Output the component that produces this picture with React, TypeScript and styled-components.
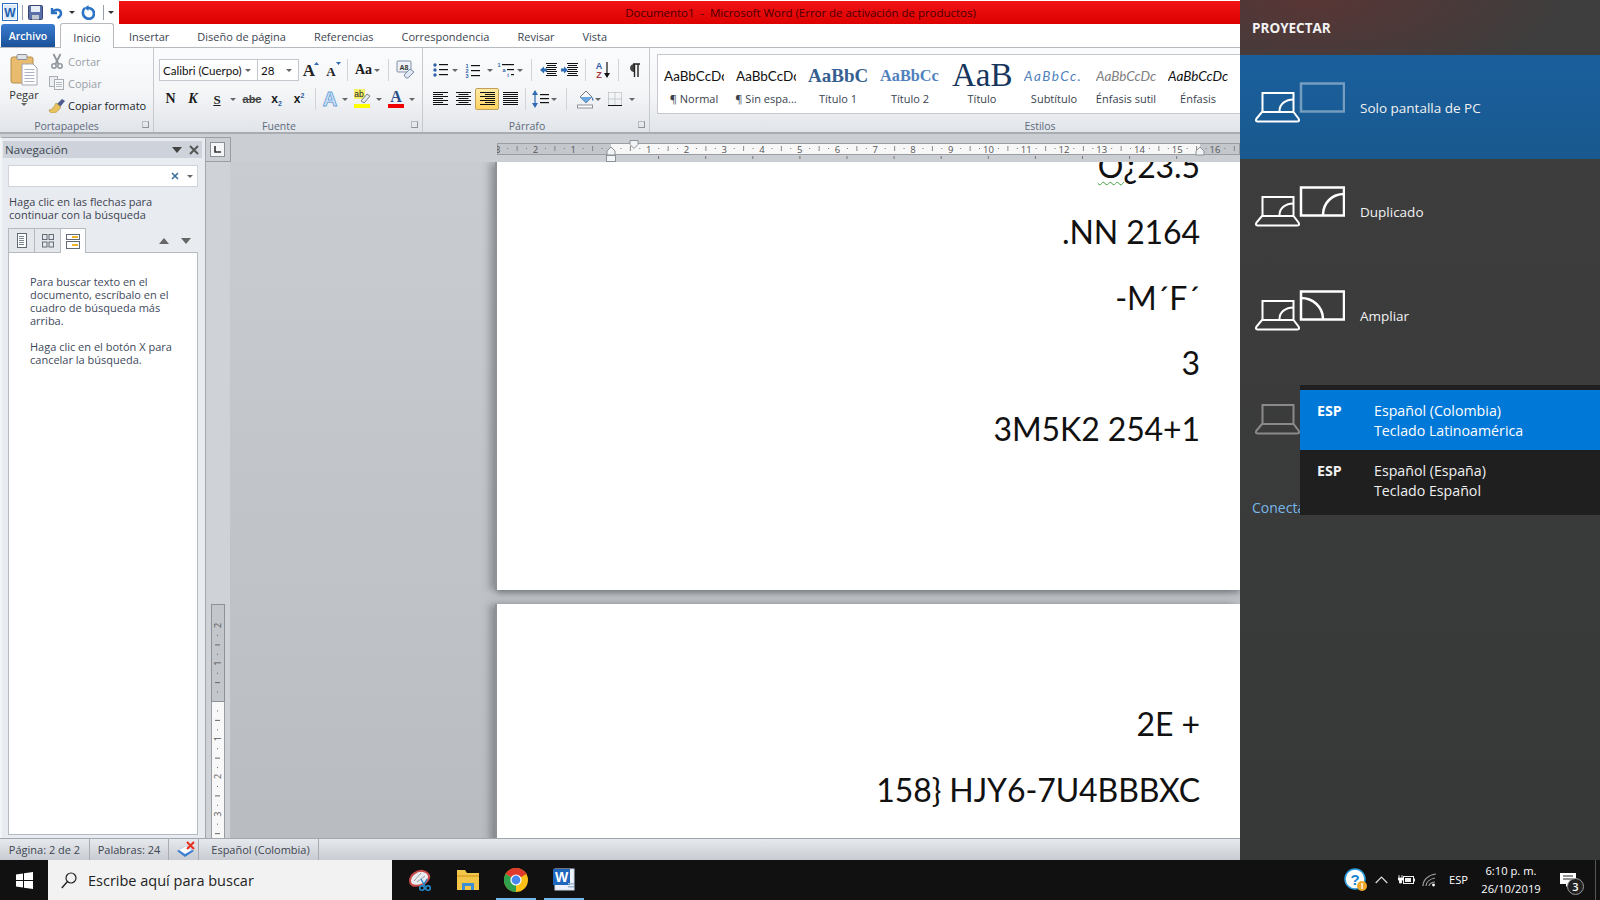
import React, { FC, ReactNode } from 'react'
import styled, { createGlobalStyle } from 'styled-components'

const UI = `"Open Sans", "Noto Sans", sans-serif`
const WIN = `"Open Sans", "Noto Sans", sans-serif`

const Global = createGlobalStyle`
	html, body { margin: 0; padding: 0; width: 1600px; height: 900px; overflow: hidden; background: #101010; }
	* { box-sizing: border-box; }
	svg { display: block; flex: none; }
`

const Screen = styled.div`
	width: 1600px;
	height: 900px;
	display: flex;
	flex-direction: column;
	overflow: hidden;
	font-family: ${UI};
`
const Desktop = styled.div`
	flex: 1;
	display: flex;
	min-height: 0;
`
const WordWindow = styled.div`
	width: 1240px;
	display: flex;
	flex-direction: column;
	background: #ccd0d5;
`
const TitleBar = styled.div`
	height: 24px;
	display: flex;
	background: #fff;
	flex: none;
`
const Qat = styled.div`
	width: 119px;
	display: flex;
	align-items: center;
	padding-left: 2px;
`
const RedBar = styled.div`
	flex: 1;
	margin-top: 1px;
	display: flex;
	align-items: center;
	justify-content: center;
	padding-left: 242px;
	background: linear-gradient(#f21414, #dc0000);
	color: #4a0000;
	font-size: 11.5px;
	white-space: pre;
	letter-spacing: -0.03px;
`
const QatSep = styled.div`
	width: 1px;
	height: 15px;
	background: #9aa0a8;
`
const Slot = styled.div<{ $w: number; $h?: number; $on?: boolean }>`
	width: ${p => p.$w}px;
	height: ${p => p.$h || 22}px;
	display: flex;
	align-items: center;
	justify-content: center;
	flex: none;
	border-radius: 2px;
	${p =>
		p.$on
			? 'background: linear-gradient(#ffeaa4, #ffd35f); border: 1px solid #c2a05a;'
			: ''}
`
const Caret = styled.span<{ $c?: string }>`
	width: 0;
	height: 0;
	flex: none;
	border-left: 3px solid transparent;
	border-right: 3px solid transparent;
	border-top: 3px solid ${p => p.$c || '#666'};
`
const TabRow = styled.div`
	height: 24px;
	flex: none;
	display: flex;
	align-items: flex-end;
	background: #fff;
	border-bottom: 1px solid #b6babf;
	font-size: 11px;
	color: #3c4550;
`
const FileTab = styled.div`
	width: 54px;
	height: 23px;
	margin: 0 5px 0 1px;
	padding-top: 1px;
	display: flex;
	align-items: center;
	justify-content: center;
	color: #fff;
	font-size: 10.5px;
	font-weight: 600;
	border-radius: 3px 3px 0 0;
	background: linear-gradient(#3a7bcf, #1a5299);
`
const Tab = styled.div<{ $active?: boolean }>`
	height: 24px;
	padding: 2px 14px 0;
	display: flex;
	align-items: center;
	${p =>
		p.$active
			? `
		width: 54px; padding: 2px 0 0; justify-content: center; margin: 0 1px 0 0;
		background: linear-gradient(#fff, #fbfcfd);
		border: 1px solid #b6babf; border-bottom: 0;
		border-radius: 3px 3px 0 0;
		height: 25px; margin-bottom: -1px;
	`
			: ''}
`
const Ribbon = styled.div`
	height: 86px;
	flex: none;
	display: flex;
	background: linear-gradient(#fbfcfd, #f3f5f7 55%, #e1e4e9);
	border-bottom: 2px solid #a9adb2;
`
const Group = styled.div<{ $w: number; $end?: boolean }>`
	width: ${p => p.$w}px;
	flex: none;
	display: flex;
	flex-direction: column;
	position: relative;
	border-right: ${p => (p.$end ? '0' : '1px solid #c6cad0')};
`
const GroupBody = styled.div`
	flex: 1;
	min-height: 0;
	display: flex;
`
const GroupLabel = styled.div<{ $l?: number; $r?: number }>`
	height: 13px;
	flex: none;
	text-align: center;
	font-size: 10.5px;
	color: #5d6a7b;
	line-height: 14px;
	padding: 0 ${p => p.$r || 0}px 0 ${p => p.$l || 0}px;
`
const Launcher = styled.div`
	position: absolute;
	right: 4px;
	bottom: 4px;
	width: 7px;
	height: 7px;
	border: 1px solid #8d939b;
	border-top-color: #b8bcc2;
	border-left-color: #b8bcc2;
`
const PasteCol = styled.div`
	width: 48px;
	display: flex;
	flex-direction: column;
	align-items: center;
	padding-top: 6px;
	font-size: 11px;
	color: #333;
	gap: 1px;
`
const ClipCol = styled.div`
	padding-top: 2px;
	display: flex;
	flex-direction: column;
	font-size: 11px;
`
const ClipRow = styled.div<{ $off?: boolean }>`
	height: 22px;
	display: flex;
	align-items: center;
	gap: 3px;
	color: ${p => (p.$off ? '#9a9fa6' : '#20242a')};
	white-space: nowrap;
`
const Rows = styled.div<{ $pad: number }>`
	padding: 11px 0 0 ${p => p.$pad}px;
	display: flex;
	flex-direction: column;
	gap: 7px;
`
const ToolRow = styled.div`
	height: 22px;
	display: flex;
	align-items: center;
`
const Combo = styled.div<{ $w: number }>`
	width: ${p => p.$w}px;
	height: 22px;
	display: flex;
	align-items: center;
	justify-content: space-between;
	padding: 0 6px 0 3px;
	background: #fff;
	border: 1px solid #c4c8ce;
	margin-right: -1px;
	font-family: Lato, sans-serif;
	font-size: 11.6px;
	color: #111;
	white-space: nowrap;
`
const VSep = styled.div<{ $m: number }>`
	width: 1px;
	height: 22px;
	background: #d0d3d8;
	margin: 0 ${p => p.$m}px;
	flex: none;
`
const Glyph = styled.span<{ $size?: number; $serif?: boolean; $c?: string; $i?: boolean; $u?: boolean; $s?: boolean }>`
	font-family: ${p => (p.$serif ? '"Liberation Serif", serif' : '"Liberation Sans", sans-serif')};
	font-weight: 700;
	font-size: ${p => p.$size || 13}px;
	color: ${p => p.$c || '#1b1b1b'};
	font-style: ${p => (p.$i ? 'italic' : 'normal')};
	text-decoration: ${p => (p.$u ? 'underline' : p.$s ? 'line-through' : 'none')};
	line-height: 1;
`
const Sub = styled.sub`
	font-size: 7px;
	color: #2c5c9e;
	line-height: 0;
`
const Sup = styled.sup`
	font-size: 7px;
	color: #2c5c9e;
	line-height: 0;
`
const Gallery = styled.div`
	margin: 6px 0 0 7px;
	height: 60px;
	flex: 1;
	display: flex;
	background: #fff;
	border: 1px solid #c6cad0;
	border-right: 0;
	overflow: hidden;
`
const StyleItem = styled.div`
	width: 72px;
	flex: none;
	display: flex;
	flex-direction: column;
	align-items: center;
`
const StyleSample = styled.div<{ $font?: string; $size: number; $c: string; $b?: boolean; $i?: boolean; $ls?: number }>`
	width: 60px;
	height: 29px;
	margin-top: 6px;
	display: flex;
	align-items: center;
	justify-content: flex-start;
	overflow: hidden;
	white-space: nowrap;
	font-family: ${p => p.$font || 'Lato, sans-serif'};
	font-size: ${p => p.$size}px;
	color: ${p => p.$c};
	font-weight: ${p => (p.$b ? 700 : 400)};
	font-style: ${p => (p.$i ? 'italic' : 'normal')};
	letter-spacing: ${p => p.$ls || 0}px;
`
const StyleName = styled.div`
	font-size: 11px;
	color: #39424e;
	white-space: nowrap;
	margin-top: 1px;
`
const Work = styled.div`
	flex: 1;
	min-height: 0;
	display: flex;
`
const Nav = styled.div`
	width: 206px;
	flex: none;
	margin-top: 3px;
	padding: 3px 7px 3px 6px;
	display: flex;
	flex-direction: column;
	background: #e8ebf0;
	border-left: 2px solid #f2f4f6;
	border-right: 1px solid #a3a7ad;
	border-top: 1px solid #a3a7ad;
	position: relative;
`
const NavHead = styled.div`
	margin: 0 -4px 0 -5px;
	height: 17px;
	padding: 0 3px 0 2px;
	flex: none;
	display: flex;
	align-items: center;
	background: #ced3db;
	font-size: 11.6px;
	color: #3f4752;
`
const NavTitle = styled.div`
	flex: 1;
`
const NavSearch = styled.div`
	height: 22px;
	margin-top: 7px;
	flex: none;
	display: flex;
	align-items: center;
	justify-content: flex-end;
	gap: 8px;
	padding-right: 4px;
	background: #fff;
	border: 1px solid #d0d4da;
`
const NavHint = styled.div`
	margin: 8px 0 0 1px;
	font-size: 11px;
	line-height: 13px;
	color: #3d4450;
	height: 33px;
	flex: none;
`
const NavTabsRow = styled.div`
	height: 25px;
	flex: none;
	display: flex;
	align-items: flex-end;
	margin-bottom: -1px;
	position: relative;
	z-index: 1;
`
const NavTab = styled.div<{ $active?: boolean }>`
	width: 26px;
	height: 25px;
	display: flex;
	align-items: center;
	justify-content: center;
	border: 1px solid #b5b9c0;
	border-right: 0;
	${p => (p.$active ? 'background: #fff; border-right: 1px solid #b5b9c0; border-bottom: 0;' : 'background: #e4e7ec;')}
`
const NavArrows = styled.div`
	margin-left: auto;
	height: 25px;
	display: flex;
	align-items: center;
	gap: 12px;
	padding-right: 7px;
`
const NavPanel = styled.div`
	flex: 1;
	background: #fff;
	border: 1px solid #b5b9c0;
	padding: 22px 16px 0 21px;
	font-size: 11px;
	line-height: 13px;
	color: #414a5c;
`
const NavPara = styled.p`
	margin: 0 0 13px;
`
const DocSide = styled.div`
	flex: 1;
	min-width: 0;
	display: flex;
	flex-direction: column;
`
const RulerStrip = styled.div`
	height: 28px;
	flex: none;
	display: flex;
	padding-top: 3px;
	background: #cbced3;
`
const Corner = styled.div`
	width: 25px;
	height: 25px;
	flex: none;
	border: 1px solid #9a9ea4;
	border-left: 0;
	display: flex;
	align-items: center;
	justify-content: center;
	padding-right: 2px;
`
const CornerBtn = styled.div`
	width: 15px;
	height: 15px;
	background: #f4f5f7;
	border: 1px solid #8b9097;
	display: flex;
	align-items: center;
	justify-content: center;
`
const RulerGap = styled.div`
	width: 266px;
	flex: none;
`
const DocBody = styled.div`
	flex: 1;
	min-height: 0;
	display: flex;
	background: linear-gradient(#c9ccd1, #b9bcc0);
`
const VRulerCol = styled.div`
	width: 24px;
	flex: none;
	background: #cfd2d6;
	display: flex;
	flex-direction: column;
	justify-content: flex-end;
	padding-left: 5px;
`
const Canvas = styled.div`
	flex: 1;
	min-width: 0;
	overflow: hidden;
	display: flex;
	flex-direction: column;
	gap: 14px;
	padding-left: 267px;
`
const Page = styled.div<{ $h: number }>`
	height: ${p => p.$h}px;
	flex: none;
	background: #fff;
	overflow: hidden;
	box-shadow: -2px 0 0 #8f9398, -8px 0 7px rgba(70, 74, 80, 0.35), 0 3px 6px rgba(70, 74, 80, 0.5);
	margin-left: 0;
	padding-right: 40px;
	text-align: right;
`
const DocLines = styled.div<{ $top: number }>`
	margin-top: ${p => p.$top}px;
	font-family: Lato, sans-serif;
	font-size: 32px;
	line-height: 65.8px;
	letter-spacing: -0.1px;
	color: #111;
`
const Squiggle = styled.span`
	text-decoration: underline wavy #3fa43f 1px;
	text-underline-offset: 3px;
`
const StatusBar = styled.div`
	height: 22px;
	flex: none;
	display: flex;
	align-items: stretch;
	background: linear-gradient(#e6e9ed, #c8ccd2);
	border-top: 1px solid #a3a7ad;
	font-size: 11px;
	color: #3e4650;
`
const StatusCell = styled.div<{ $w: number; $pl?: number }>`
	width: ${p => p.$w}px;
	padding-left: ${p => p.$pl || 0}px;
	display: flex;
	align-items: center;
	justify-content: center;
	border-right: 1px solid #a9adb3;
	white-space: nowrap;
`
const Panel = styled.div`
	width: 360px;
	flex: none;
	position: relative;
	display: flex;
	flex-direction: column;
	color: #f2f2f2;
	font-family: ${WIN};
	background: radial-gradient(ellipse 260px 90px at 70px 0, rgba(130, 40, 40, 0.4), transparent), linear-gradient(#3e3e3e, #373838);
`
const PanelTitle = styled.div`
	height: 55px;
	flex: none;
	padding-left: 12px;
	display: flex;
	align-items: center;
	font-size: 13.5px;
	font-weight: 700;
`
const ProjectItem = styled.div<{ $selected?: boolean }>`
	height: 104px;
	flex: none;
	display: flex;
	align-items: flex-start;
	gap: 15px;
	padding: 25px 0 0 15px;
	font-size: 13.5px;
	background: ${p => (p.$selected ? 'linear-gradient(#1a5f9d, #19598f)' : 'transparent')};
`
const ProjectLabel = styled.div`
	padding-top: 19px;
`
const ConnectLink = styled.div`
	margin: 27px 0 0 12px;
	width: 60px;
	overflow: hidden;
	font-size: 14px;
	color: #79b8ea;
	white-space: nowrap;
`
const LangPopup = styled.div`
	position: absolute;
	top: 385px;
	left: 60px;
	width: 300px;
	height: 130px;
	padding-top: 5px;
	background: #1f1f1f;
`
const LangRow = styled.div<{ $active?: boolean }>`
	height: 60px;
	display: flex;
	padding: 11px 0 0 17px;
	font-size: 14.2px;
	line-height: 20px;
	background: ${p => (p.$active ? '#0078d7' : 'transparent')};
	color: ${p => (p.$active ? '#fff' : '#f0f0f0')};
`
const LangCode = styled.div`
	width: 57px;
	font-weight: 700;
`
const Taskbar = styled.div`
	height: 40px;
	flex: none;
	display: flex;
	align-items: stretch;
	background: #111112;
	color: #fff;
	font-family: ${WIN};
`
const StartBtn = styled.div`
	width: 48px;
	display: flex;
	align-items: center;
	justify-content: center;
`
const SearchBox = styled.div`
	width: 344px;
	display: flex;
	align-items: center;
	gap: 11px;
	padding-left: 13px;
	background: #f2f2f2;
	color: #222;
	font-size: 14.5px;
`
const TaskApps = styled.div`
	display: flex;
	gap: 8px;
	padding-left: 8px;
`
const TaskApp = styled.div<{ $open?: boolean }>`
	width: 40px;
	display: flex;
	align-items: center;
	justify-content: center;
	border-bottom: 2px solid ${p => (p.$open ? '#76b9ed' : 'transparent')};
	border-top: 2px solid transparent;
`
const Tray = styled.div`
	margin-left: auto;
	display: flex;
	align-items: center;
	padding-right: 11px;
	position: relative;
`
const TrayCell = styled.div<{ $w: number }>`
	width: ${p => p.$w}px;
	height: 40px;
	display: flex;
	align-items: center;
	justify-content: center;
	position: relative;
	font-size: 11.2px;
	text-align: center;
	line-height: 18px;
`
const NotifBadge = styled.div`
	position: absolute;
	left: 20px;
	top: 18px;
	width: 17px;
	height: 17px;
	border-radius: 50%;
	border: 1px solid #999;
	background: #222;
	font-size: 11px;
	line-height: 15px;
	font-weight: 600;
`
const ShowDesktop = styled.div`
	position: absolute;
	right: 4px;
	bottom: 0;
	width: 1px;
	height: 40px;
	background: #555;
`

/* ---------- little drawings ---------- */

const Svg: FC<{ w: number; h: number; children: ReactNode }> = ({ w, h, children }) => (
	<svg width={w} height={h} viewBox={`0 0 ${w} ${h}`}>
		{children}
	</svg>
)

const WordIcon = () => (
	<Svg w={16} h={18}>
		<rect x="0.5" y="0.5" width="15" height="17" fill="#fff" stroke="#2a6fc0" />
		<rect x="2" y="2" width="12" height="14" fill="#dbe9f8" />
		<text x="8" y="14" textAnchor="middle" fontFamily="Liberation Sans" fontWeight="700" fontSize="12" fill="#1d5fae">W</text>
	</Svg>
)
const SaveIcon = () => (
	<Svg w={15} h={15}>
		<rect x="0.5" y="0.5" width="14" height="14" rx="1" fill="#5a6fa8" stroke="#39466f" />
		<rect x="3" y="1" width="9" height="6" fill="#e8eef7" />
		<rect x="4" y="10" width="7" height="4.5" fill="#c2c8d2" />
	</Svg>
)
const UndoIcon = () => (
	<Svg w={14} h={14}>
		<path d="M3 3v5h5" fill="none" stroke="#2a6fc0" strokeWidth="2.4" />
		<path d="M3.5 7.5C6 3.5 12 4 12 8.5c0 2-1.5 3.5-3.5 4.5" fill="none" stroke="#2a6fc0" strokeWidth="2.4" />
	</Svg>
)
const RedoIcon = () => (
	<Svg w={14} h={15}>
		<path d="M4 3C1 5 1 11 5 13s8 0 8-4.5S9 3 7 3" fill="none" stroke="#2d73c6" strokeWidth="2.6" />
		<path d="M7.5 0v6L3.5 3z" fill="#2d73c6" />
	</Svg>
)
const PasteIcon = () => (
	<Svg w={28} h={32}>
		<rect x="1" y="3" width="22" height="26" rx="2" fill="#e9bb6f" stroke="#b68c4b" />
		<rect x="7" y="0.5" width="10" height="5" rx="1" fill="#dfe2e6" stroke="#8a8f96" />
		<path d="M12 10h11l4 4v17H12z" fill="#fff" stroke="#a2a7ae" />
		{[15, 18, 21, 24, 27].map(y => (
			<rect key={y} x="14.5" y={y} width="10" height="1" fill="#a9b4c4" />
		))}
	</Svg>
)
const ScissorsIcon = () => (
	<Svg w={14} h={16}>
		<path d="M3.5 1l5 10M10.5 1l-5 10" stroke="#8f959c" strokeWidth="1.8" />
		<circle cx="4" cy="13" r="2.2" fill="none" stroke="#8f959c" strokeWidth="1.5" />
		<circle cx="10" cy="13" r="2.2" fill="none" stroke="#8f959c" strokeWidth="1.5" />
	</Svg>
)
const CopyIcon = () => (
	<Svg w={15} h={14}>
		<rect x="0.5" y="0.5" width="8" height="10" fill="#eceef1" stroke="#a8adb4" />
		<rect x="5.5" y="3.5" width="9" height="10" fill="#f7f8f9" stroke="#a8adb4" />
		{[6, 8, 10].map(y => (
			<rect key={y} x="7" y={y} width="6" height="1" fill="#b5bac1" />
		))}
	</Svg>
)
const BrushIcon = () => (
	<Svg w={18} h={15}>
		<path d="M9 6l5-5 3 2-5 6z" fill="#4e5b8f" />
		<path d="M1 12c3 0 5-3 7-7l5 4c-2 3-5 6-7 6-3 0-5-1-5-3z" fill="#e7c25e" stroke="#a78b3e" strokeWidth="0.6" />
	</Svg>
)
const GrowIcon: FC<{ big?: boolean }> = ({ big }) => (
	<Svg w={18} h={18}>
		<text x="7" y="15" textAnchor="middle" fontFamily="Liberation Serif" fontWeight="700" fontSize={big ? 17 : 13} fill="#222">A</text>
		<path d={big ? 'M12 4l2.5-3L17 4z' : 'M12 1h5l-2.5 3z'} fill="#2f6cb5" />
	</Svg>
)
const ClearIcon = () => (
	<Svg w={20} h={20}>
		<rect x="2" y="1" width="14" height="11" rx="1" fill="#eef2f8" stroke="#7f8ea6" />
		<text x="9" y="9.5" textAnchor="middle" fontFamily="Liberation Sans" fontSize="7" fontWeight="700" fill="#333">A8</text>
		<path d="M9 15l6-6 4 3-6 6H11z" fill="#dfe7f3" stroke="#7f8ea6" />
	</Svg>
)
const EffectA = () => (
	<Svg w={18} h={20}>
		<text x="9" y="17" textAnchor="middle" fontFamily="Liberation Sans" fontWeight="700" fontSize="20" fill="#dce9f8" stroke="#6fa7dc">A</text>
	</Svg>
)
const HighlightIcon = () => (
	<Svg w={17} h={20}>
		<rect x="0" y="0" width="11" height="10" fill="#f4ee6a" />
		<text x="5" y="8" textAnchor="middle" fontFamily="Liberation Sans" fontSize="8.5" fill="#222">ab</text>
		<path d="M7 12l6-7 3 2-6 7z" fill="#e5e9f0" stroke="#77808c" />
		<rect x="0" y="15" width="16" height="4" fill="#ffff00" />
	</Svg>
)
const FontColorIcon = () => (
	<Svg w={16} h={20}>
		<text x="8" y="13" textAnchor="middle" fontFamily="Liberation Serif" fontWeight="700" fontSize="16" fill="#2b4d87">A</text>
		<rect x="0" y="15" width="16" height="4" fill="#f00000" />
	</Svg>
)
const Lines: FC<{ w?: number; rows: [number, number][]; gap?: number; y?: number }> = ({ w = 15, rows, gap = 2, y = 0 }) => (
	<Svg w={w} h={y + rows.length * gap + 1}>
		{rows.map(([x, l], i) => (
			<rect key={i} x={x} y={y + i * gap} width={l} height="1" fill="#111" />
		))}
	</Svg>
)
const alignRows = (kind: string): [number, number][] =>
	[0, 1, 2, 3, 4, 5, 6].map(i => {
		const l = kind === 'justify' || i % 2 === 0 ? 15 : 10
		if (kind === 'right') return [15 - l, l] as [number, number]
		if (kind === 'center') return [(15 - l) / 2, l] as [number, number]
		return [0, l] as [number, number]
	})
const BulletIcon = () => (
	<Svg w={15} h={14}>
		{[2, 7, 12].map(y => (
			<React.Fragment key={y}>
				<circle cx="2" cy={y} r="1.7" fill="#2f62a8" />
				<rect x="6" y={y - 1} width="9" height="1.2" fill="#111" />
			</React.Fragment>
		))}
	</Svg>
)
const NumIcon = () => (
	<Svg w={15} h={15}>
		{[1, 2, 3].map(n => (
			<React.Fragment key={n}>
				<text x="2" y={n * 5 - 0.5} textAnchor="middle" fontFamily="Liberation Sans" fontWeight="700" fontSize="5.5" fill="#2f62a8">{n}</text>
				<rect x="6" y={n * 5 - 3} width="9" height="1.2" fill="#111" />
			</React.Fragment>
		))}
	</Svg>
)
const MultiIcon = () => (
	<Svg w={17} h={16}>
		<text x="2" y="5" fontFamily="Liberation Sans" fontWeight="700" fontSize="5.5" textAnchor="middle" fill="#2f62a8">1</text>
		<rect x="5" y="2" width="12" height="1.2" fill="#111" />
		<text x="7" y="10" fontFamily="Liberation Sans" fontWeight="700" fontSize="5.5" textAnchor="middle" fill="#2f62a8">a</text>
		<rect x="10" y="7" width="7" height="1.2" fill="#111" />
		<text x="11" y="15" fontFamily="Liberation Sans" fontWeight="700" fontSize="5.5" textAnchor="middle" fill="#2f62a8">i</text>
		<rect x="14" y="12" width="3" height="1.2" fill="#111" />
	</Svg>
)
const IndentIcon: FC<{ out?: boolean }> = ({ out }) => (
	<Svg w={17} h={14}>
		{[1, 3, 5, 7, 9, 11, 13].map((y, i) => (
			<rect key={y} x={i % 2 ? 7 : 6} y={y - 1} width={i % 2 ? 9 : 11} height="1" fill="#111" />
		))}
		<path d={out ? 'M0 7l4-3.5v2h3v3H4v2z' : 'M7 7L3 3.5v2H0v3h3v2z'} fill="#2f6cb5" />
	</Svg>
)
const SortIcon = () => (
	<Svg w={16} h={18}>
		<text x="5" y="8" fontFamily="Liberation Sans" fontWeight="700" fontSize="9" textAnchor="middle" fill="#2f62a8">A</text>
		<text x="5" y="17" fontFamily="Liberation Sans" fontWeight="700" fontSize="9" textAnchor="middle" fill="#a33a3a">Z</text>
		<path d="M13 1v14" stroke="#111" strokeWidth="1.2" />
		<path d="M10 12l3 5 3-5z" fill="#111" />
	</Svg>
)
const Pilcrow = () => (
	<Svg w={12} h={15}>
		<path d="M5 1.5a3.5 3.5 0 0 0 0 7z" fill="#444" stroke="#444" />
		<path d="M5.5 1v13M9 1v13M4 1h7" stroke="#222" strokeWidth="1.4" fill="none" />
	</Svg>
)
const SpacingIcon = () => (
	<Svg w={17} h={20}>
		<path d="M3 1l3 5H0zM3 19l3-5H0z" fill="#2f6cb5" />
		<rect x="2.4" y="5" width="1.2" height="10" fill="#2f6cb5" />
		{[5, 9, 13].map(y => (
			<rect key={y} x="8" y={y} width="9" height="1.2" fill="#111" />
		))}
	</Svg>
)
const FillIcon = () => (
	<Svg w={17} h={20}>
		<path d="M3 8l6-6 6 6-6 6z" fill="#f4f6fa" stroke="#6f7783" />
		<path d="M3 8h12l-6 6z" fill="#6ba8e2" />
		<path d="M15 8c1.5 2 2 3 1 4-1-.8-1-2-1-4z" fill="#2f6cb5" />
		<rect x="0.5" y="16" width="15" height="3" fill="#fff" stroke="#8b919a" />
	</Svg>
)
const BorderIcon = () => (
	<Svg w={14} h={14}>
		<path d="M.5.5h13v13M.5.5v13M7 .5v13M.5 7h13" fill="none" stroke="#a4a8ae" strokeDasharray="1 1" />
		<rect x="0" y="13" width="14" height="1" fill="#111" />
	</Svg>
)
const NavClose = () => (
	<Svg w={10} h={10}>
		<path d="M1 1l8 8M9 1l-8 8" stroke="#555" strokeWidth="2" />
	</Svg>
)
const BlueX = () => (
	<Svg w={8} h={8}>
		<path d="M1 1l6 6M7 1L1 7" stroke="#336c9e" strokeWidth="1.5" />
	</Svg>
)
const PagesIcon = () => (
	<Svg w={10} h={15}>
		<rect x="0.5" y="0.5" width="9" height="14" fill="#fff" stroke="#5f6875" />
		{[3, 5, 7, 9, 11].map(y => (
			<rect key={y} x="2" y={y} width="5" height="1" fill="#7a8391" />
		))}
	</Svg>
)
const ThumbsIcon = () => (
	<Svg w={12} h={14}>
		<rect x="0.5" y="0.5" width="4.5" height="5" fill="none" stroke="#626b77" />
		<rect x="7" y="0.5" width="4.5" height="5" fill="none" stroke="#626b77" />
		<rect x="0.5" y="8" width="4.5" height="5" fill="none" stroke="#626b77" />
		<rect x="7" y="8" width="4.5" height="5" fill="none" stroke="#626b77" />
	</Svg>
)
const ResultsIcon = () => (
	<Svg w={14} h={15}>
		<rect x="0.5" y="0.5" width="13" height="5" fill="#fff" stroke="#626b77" />
		<rect x="0.5" y="7.5" width="13" height="7" fill="#fff" stroke="#626b77" />
		<rect x="6" y="2" width="6" height="2" fill="#f0b429" />
		<rect x="6" y="10" width="6" height="2" fill="#f0b429" />
	</Svg>
)
const Tri: FC<{ up?: boolean; c?: string }> = ({ up, c = '#555' }) => (
	<Svg w={10} h={6}>
		<path d={up ? 'M0 6h10L5 0z' : 'M0 0h10L5 6z'} fill={c} />
	</Svg>
)
const SpellIcon = () => (
	<Svg w={20} h={18}>
		<path d="M1 10l9-5 8 5-9 6z" fill="#3f7fd0" />
		<path d="M3 9l7-4 6 4-7 4z" fill="#fff" />
		<path d="M11 1l7 7M18 1l-7 7" stroke="#e8301e" strokeWidth="2" />
	</Svg>
)

const Projection: FC<{ screen?: 'none' | 'dup' | 'ext'; off?: boolean; dimLaptop?: boolean }> = ({ screen, off, dimLaptop }) => {
	const lap = dimLaptop ? '#8a8a8a' : '#fff'
	return (
		<Svg w={90} h={44}>
			<path d="M7.5 32V13h31v19M7 32l-5.5 6.5q-1.5 3 1 3H42.5q2.5 0 1-3L38.5 32z" fill="none" stroke={lap} strokeWidth="2" />
			{!dimLaptop && <path d="M24.5 31c0-7 6-11.5 14-11.5" fill="none" stroke={lap} strokeWidth="2" />}
			{screen && (
				<rect x="46" y="3.5" width="43" height="28" fill="none" stroke="#fff" strokeOpacity={off ? 0.4 : 1} strokeWidth="2.5" />
			)}
			{screen === 'dup' && <path d="M68 31c0-12 9-21 21-21" fill="none" stroke="#fff" strokeWidth="2.5" />}
			{screen === 'ext' && <path d="M46 10c12 0 22 9 22 21" fill="none" stroke="#fff" strokeWidth="2.5" />}
		</Svg>
	)
}

const WinLogo = () => (
	<Svg w={17} h={17}>
		<path d="M0 2.5l7-1v6.5H0zM8 1.3L17 0v8H8zM0 9h7v6.5l-7-1zM8 9h9v8l-9-1.3z" fill="#fff" />
	</Svg>
)
const SearchGlass = () => (
	<Svg w={16} h={17}>
		<circle cx="10" cy="6" r="5" fill="none" stroke="#222" strokeWidth="1.2" />
		<path d="M6.5 9.5L.8 16" stroke="#222" strokeWidth="1.4" />
	</Svg>
)
const SnipApp = () => (
	<Svg w={24} h={24}>
		<path d="M2 13C2 7 9 2 15 3c5 1 8 5 5 9-3 5-12 7-16 5-1.5-1-2-2-2-4z" fill="#e9ecef" stroke="#c84a4a" strokeWidth="2" />
		<path d="M6 13l7-8M9 14l8-6" stroke="#9aa0a8" />
		<path d="M13 11l4 7M19 11l-4 7" stroke="#2a8fd0" strokeWidth="1.5" />
		<circle cx="14" cy="20" r="2.3" fill="none" stroke="#2a8fd0" strokeWidth="1.5" />
		<circle cx="20" cy="20" r="2.3" fill="none" stroke="#2a8fd0" strokeWidth="1.5" />
	</Svg>
)
const FolderApp = () => (
	<Svg w={22} h={20}>
		<path d="M0 0h8l2 3h12v17H0z" fill="#f3c649" />
		<rect x="0" y="5" width="22" height="2" fill="#e0ab2e" />
		<rect x="5" y="13" width="12" height="7" fill="#3a8fd6" />
		<rect x="8" y="16" width="6" height="4" fill="#f3c649" />
	</Svg>
)
const ChromeApp = () => (
	<Svg w={24} h={24}>
		<circle cx="12" cy="12" r="12" fill="#fbc116" />
		<path d="M12 12L1.6 6A12 12 0 0 1 22.4 6z" fill="#e0392d" />
		<path d="M12 12L1.6 6A12 12 0 0 0 12 24z" fill="#2fa14c" />
		<circle cx="12" cy="12" r="5.6" fill="#fff" />
		<circle cx="12" cy="12" r="4.4" fill="#4688f0" />
	</Svg>
)
const WordApp = () => (
	<Svg w={24} h={24}>
		<rect x="3" y="1" width="19" height="21" fill="#eef3fa" stroke="#cfdcee" />
		<rect x="1" y="1" width="17" height="16" fill="#1f66bd" />
		<text x="9.5" y="14" textAnchor="middle" fontFamily="Liberation Sans" fontWeight="700" fontSize="14" fill="#fff">W</text>
		<rect x="16" y="15" width="6" height="1.5" fill="#9fb7d8" />
		<rect x="16" y="18" width="6" height="1.5" fill="#9fb7d8" />
	</Svg>
)
const HelpTray = () => (
	<Svg w={24} h={24}>
		<circle cx="11" cy="11" r="10" fill="#fff" stroke="#2b9be0" strokeWidth="1.5" />
		<text x="11" y="16.5" textAnchor="middle" fontFamily="Liberation Sans" fontWeight="700" fontSize="15" fill="#1682d2">?</text>
		<circle cx="18" cy="18" r="5" fill="#f0a92c" />
		<rect x="17.4" y="15" width="1.3" height="6" fill="#fff" />
	</Svg>
)
const Chevron = () => (
	<Svg w={13} h={8}>
		<path d="M.7 7L6.5 1l5.8 6" fill="none" stroke="#ddd" strokeWidth="1.2" />
	</Svg>
)
const BatteryTray = () => (
	<Svg w={17} h={12}>
		<rect x="5.5" y="2.5" width="10" height="7" fill="none" stroke="#eee" />
		<rect x="16" y="4.5" width="1" height="3" fill="#eee" />
		<rect x="7" y="4" width="6" height="4" fill="#eee" />
		<path d="M1 1v3M4 1v3M0 4h5v2H3.5v3H1.5V6H0z" stroke="#fff" strokeWidth="0.8" fill="#fff" />
	</Svg>
)
const WifiTray = () => (
	<Svg w={17} h={14}>
		<path d="M1 13C1 7 6 2 14 1M4 13c0-4 4-7 9-8M7 13c0-2 3-4 6-4" fill="none" stroke="#9c9c9c" strokeWidth="1.2" />
		<circle cx="11.5" cy="12" r="1.4" fill="#fff" />
	</Svg>
)
const NotifIcon = () => (
	<Svg w={17} h={15}>
		<path d="M0 0h16v11H9l-3 3v-3H0z" fill="#fff" />
		<path d="M3 3h10M3 6h10" stroke="#222" />
	</Svg>
)

/* ---------- rulers ---------- */

const CM = 37.75

const HRuler = () => {
	const zero = 114
	const right = 703
	const marks = []
	for (let q = -12; q <= 68; q++) {
		const x = zero + (q * CM) / 4
		const n = Math.abs(q / 4)
		if (q % 4 === 0) {
			if (q !== 0)
				marks.push(
					<text key={q} x={x} y="16" textAnchor="middle" fontFamily="Open Sans" fontSize="9.5" fill="#555">
						{n}
					</text>
				)
		} else if (q % 2 === 0) {
			marks.push(<rect key={q} x={x} y="9" width="1" height="5" fill="#888" />)
		} else {
			marks.push(<rect key={q} x={x} y="11" width="1" height="1" fill="#777" />)
		}
	}
	const stops = []
	for (let i = 1; i <= 12; i++) {
		stops.push(<rect key={i} x={zero + i * 47.1} y="19" width="1" height="3" fill="#777" />)
	}
	return (
		<Svg w={743} h={25}>
			<rect x="0.5" y="6.5" width="742" height="11" fill="#c4c7cc" stroke="#9a9ea4" />
			<rect x={zero} y="7" width={right - zero} height="10" fill="#f7f7f8" />
			{marks}
			{stops}
			<path d={`M${zero - 4} 18v-4l4-4 4 4v4z`} fill="#f2f3f4" stroke="#8d9298" />
			<rect x={zero - 4.5} y="18.5" width="9" height="6" fill="#f2f3f4" stroke="#8d9298" />
			<path d={`M${zero + 19} 3.5h8v4l-4 4-4-4z`} fill="#f2f3f4" stroke="#8d9298" />
			<path d={`M${right - 4} 18v-4l4-4 4 4v4z`} fill="#f2f3f4" stroke="#8d9298" />
		</Svg>
	)
}

const VRuler = () => {
	const zero = 97
	const marks = []
	for (let q = -8; q <= 15; q++) {
		const y = zero + (q * CM) / 4
		if (q % 4 === 0) {
			if (q !== 0)
				marks.push(
					<text key={q} x="7" y={y + 3} textAnchor="middle" fontFamily="Open Sans" fontSize="9" fill="#555" transform={`rotate(-90 7 ${y})`}>
						{Math.abs(q / 4)}
					</text>
				)
		} else if (q % 2 === 0) {
			marks.push(<rect key={q} x="4" y={y} width="5" height="1" fill="#666" />)
		} else {
			marks.push(<rect key={q} x="6" y={y} width="1" height="1" fill="#666" />)
		}
	}
	return (
		<Svg w={14} h={234}>
			<rect x="0.5" y="0.5" width="13" height="234" fill="#f8f8f9" stroke="#9a9ea4" />
			<rect x="0.5" y="0.5" width="13" height="97" fill="#c3c6ca" stroke="#8d9298" />
			{marks}
		</Svg>
	)
}

const TABS = ['Insertar', 'Diseño de página', 'Referencias', 'Correspondencia', 'Revisar', 'Vista']

const GALLERY = [
	{ text: 'AaBbCcDc', name: '¶ Normal', size: 13.5, c: '#111' },
	{ text: 'AaBbCcDc', name: '¶ Sin espa...', size: 13.5, c: '#111' },
	{ text: 'AaBbCc', name: 'Título 1', size: 19, c: '#365f91', b: true, font: '"Liberation Serif", serif' },
	{ text: 'AaBbCc', name: 'Título 2', size: 16.3, c: '#4f81bd', b: true, font: '"Liberation Serif", serif' },
	{ text: 'AaB', name: 'Título', size: 33, c: '#17365d', font: '"Liberation Serif", serif' },
	{ text: 'AaBbCc.', name: 'Subtítulo', size: 13.5, c: '#4f81bd', i: true, ls: 1.5 },
	{ text: 'AaBbCcDc', name: 'Énfasis sutil', size: 13.5, c: '#808080', i: true },
	{ text: 'AaBbCcDc', name: 'Énfasis', size: 13.5, c: '#111', i: true }
]

const App: FC = () => (
	<Screen>
		<Global />
		<Desktop>
			<WordWindow>
				<TitleBar>
					<Qat>
						<WordIcon />
						<Slot $w={9} $h={18}>
							<QatSep />
						</Slot>
						<Slot $w={16} $h={18}>
							<SaveIcon />
						</Slot>
						<Slot $w={26} $h={18}>
							<UndoIcon />
						</Slot>
						<Caret $c="#333" />
						<Slot $w={25} $h={18}>
							<RedoIcon />
						</Slot>
						<Slot $w={6} $h={18}>
							<QatSep />
						</Slot>
						<Slot $w={10} $h={18}>
							<Caret $c="#333" />
						</Slot>
					</Qat>
					<RedBar>{'Documento1  -  Microsoft Word (Error de activación de productos)'}</RedBar>
				</TitleBar>
				<TabRow>
					<FileTab>Archivo</FileTab>
					<Tab $active>Inicio</Tab>
					{TABS.map(t => (
						<Tab key={t}>{t}</Tab>
					))}
				</TabRow>
				<Ribbon>
					<Group $w={154}>
						<GroupBody>
							<PasteCol>
								<PasteIcon />
								<span>Pegar</span>
								<Caret />
							</PasteCol>
							<ClipCol>
								<ClipRow $off>
									<Slot $w={17}>
										<ScissorsIcon />
									</Slot>
									Cortar
								</ClipRow>
								<ClipRow $off>
									<Slot $w={17}>
										<CopyIcon />
									</Slot>
									Copiar
								</ClipRow>
								<ClipRow>
									<Slot $w={17}>
										<BrushIcon />
									</Slot>
									Copiar formato
								</ClipRow>
							</ClipCol>
						</GroupBody>
						<GroupLabel $r={20}>Portapapeles</GroupLabel>
						<Launcher />
					</Group>
					<Group $w={269}>
						<GroupBody>
							<Rows $pad={5}>
								<ToolRow>
									<Combo $w={99}>
										Calibri (Cuerpo) <Caret />
									</Combo>
									<Combo $w={42}>
										28 <Caret />
									</Combo>
									<Slot $w={25}>
										<GrowIcon big />
									</Slot>
									<Slot $w={19}>
										<GrowIcon />
									</Slot>
									<VSep $m={5} />
									<Slot $w={21}>
										<Glyph $serif $size={14}>
											Aa
										</Glyph>
									</Slot>
									<Caret />
									<VSep $m={8} />
									<Slot $w={16}>
										<ClearIcon />
									</Slot>
								</ToolRow>
								<ToolRow>
									<Slot $w={23}>
										<Glyph $serif $size={14}>
											N
										</Glyph>
									</Slot>
									<Slot $w={22}>
										<Glyph $serif $i $size={14}>
											K
										</Glyph>
									</Slot>
									<Slot $w={26}>
										<Glyph $serif $u $size={13}>
											S
										</Glyph>
									</Slot>
									<Caret />
									<Slot $w={32}>
										<Glyph $s $size={11} $c="#444">
											abc
										</Glyph>
									</Slot>
									<Slot $w={17}>
										<Glyph $size={12}>
											x<Sub>2</Sub>
										</Glyph>
									</Slot>
									<Slot $w={28}>
										<Glyph $size={12}>
											x<Sup>2</Sup>
										</Glyph>
									</Slot>
									<VSep $m={2} />
									<Slot $w={24}>
										<EffectA />
									</Slot>
									<Caret />
									<Slot $w={28}>
										<HighlightIcon />
									</Slot>
									<Caret />
									<Slot $w={27}>
										<FontColorIcon />
									</Slot>
									<Caret />
								</ToolRow>
							</Rows>
						</GroupBody>
						<GroupLabel $r={18}>Fuente</GroupLabel>
						<Launcher />
					</Group>
					<Group $w={227}>
						<GroupBody>
							<Rows $pad={6}>
								<ToolRow>
									<Slot $w={23}>
										<BulletIcon />
									</Slot>
									<Caret />
									<Slot $w={29}>
										<NumIcon />
									</Slot>
									<Caret />
									<Slot $w={24}>
										<MultiIcon />
									</Slot>
									<Caret />
									<VSep $m={8} />
									<Slot $w={17}>
										<IndentIcon out />
									</Slot>
									<Slot $w={24}>
										<IndentIcon />
									</Slot>
									<VSep $m={4} />
									<Slot $w={24}>
										<SortIcon />
									</Slot>
									<VSep $m={4} />
									<Slot $w={24}>
										<Pilcrow />
									</Slot>
								</ToolRow>
								<ToolRow>
									<Slot $w={22}>
										<Lines rows={alignRows('left')} />
									</Slot>
									<Slot $w={24}>
										<Lines rows={alignRows('center')} />
									</Slot>
									<Slot $w={24} $on>
										<Lines rows={alignRows('right')} />
									</Slot>
									<Slot $w={22}>
										<Lines rows={alignRows('justify')} />
									</Slot>
									<VSep $m={4} />
									<Slot $w={21}>
										<SpacingIcon />
									</Slot>
									<Caret />
									<VSep $m={9} />
									<Slot $w={19}>
										<FillIcon />
									</Slot>
									<Caret />
									<Slot $w={28}>
										<BorderIcon />
									</Slot>
									<Caret />
								</ToolRow>
							</Rows>
						</GroupBody>
						<GroupLabel $r={18}>Párrafo</GroupLabel>
						<Launcher />
					</Group>
					<Group $w={590} $end>
						<GroupBody>
							<Gallery>
								{GALLERY.map(s => (
									<StyleItem key={s.name}>
										<StyleSample $size={s.size} $c={s.c} $b={s.b} $i={s.i} $font={s.font} $ls={s.ls}>
											{s.text}
										</StyleSample>
										<StyleName>{s.name}</StyleName>
									</StyleItem>
								))}
							</Gallery>
						</GroupBody>
						<GroupLabel $l={190}>Estilos</GroupLabel>
					</Group>
				</Ribbon>
				<Work>
					<Nav>
						<NavHead>
							<NavTitle>Navegación</NavTitle>
							<Slot $w={24} $h={16}>
								<Tri c="#444" />
							</Slot>
							<NavClose />
						</NavHead>
						<NavSearch>
							<BlueX />
							<Caret />
						</NavSearch>
						<NavHint>
							Haga clic en las flechas para
							<br />
							continuar con la búsqueda
						</NavHint>
						<NavTabsRow>
							<NavTab>
								<PagesIcon />
							</NavTab>
							<NavTab>
								<ThumbsIcon />
							</NavTab>
							<NavTab $active>
								<ResultsIcon />
							</NavTab>
							<NavArrows>
								<Tri up c="#666" />
								<Tri c="#666" />
							</NavArrows>
						</NavTabsRow>
						<NavPanel>
							<NavPara>Para buscar texto en el documento, escríbalo en el cuadro de búsqueda más arriba.</NavPara>
							<NavPara>Haga clic en el botón X para cancelar la búsqueda.</NavPara>
						</NavPanel>
					</Nav>
					<DocSide>
						<RulerStrip>
							<Corner>
								<CornerBtn>
									<Svg w={7} h={7}>
										<path d="M1 0v6h6" fill="none" stroke="#333" strokeWidth="1.6" />
									</Svg>
								</CornerBtn>
							</Corner>
							<RulerGap />
							<HRuler />
						</RulerStrip>
						<DocBody>
							<VRulerCol>
								<VRuler />
							</VRulerCol>
							<Canvas>
								<Page $h={428}>
									<DocLines $top={-29}>
										<div>
											<Squiggle>O¿</Squiggle>23.5
										</div>
										<div>.NN 2164</div>
										<div>-M´F´</div>
										<div>3</div>
										<div>3M5K2 254+1</div>
									</DocLines>
								</Page>
								<Page $h={300}>
									<DocLines $top={87}>
										<div>2E +</div>
										<div>{'158} HJY6-7U4BBBXC'}</div>
									</DocLines>
								</Page>
							</Canvas>
						</DocBody>
					</DocSide>
				</Work>
				<StatusBar>
					<StatusCell $w={90}>Página: 2 de 2</StatusCell>
					<StatusCell $w={79}>Palabras: 24</StatusCell>
					<StatusCell $w={30} $pl={4}>
						<SpellIcon />
					</StatusCell>
					<StatusCell $w={120} $pl={4}>
						Español (Colombia)
					</StatusCell>
				</StatusBar>
			</WordWindow>
			<Panel>
				<PanelTitle>PROYECTAR</PanelTitle>
				<ProjectItem $selected>
					<Projection screen="none" off />
					<ProjectLabel>Solo pantalla de PC</ProjectLabel>
				</ProjectItem>
				<ProjectItem>
					<Projection screen="dup" />
					<ProjectLabel>Duplicado</ProjectLabel>
				</ProjectItem>
				<ProjectItem>
					<Projection screen="ext" />
					<ProjectLabel>Ampliar</ProjectLabel>
				</ProjectItem>
				<ProjectItem>
					<Projection dimLaptop />
				</ProjectItem>
				<ConnectLink>Conectarse a una pantalla inalámbrica</ConnectLink>
				<LangPopup>
					<LangRow $active>
						<LangCode>ESP</LangCode>
						<div>
							Español (Colombia)
							<br />
							Teclado Latinoamérica
						</div>
					</LangRow>
					<LangRow>
						<LangCode>ESP</LangCode>
						<div>
							Español (España)
							<br />
							Teclado Español
						</div>
					</LangRow>
				</LangPopup>
			</Panel>
		</Desktop>
		<Taskbar>
			<StartBtn>
				<WinLogo />
			</StartBtn>
			<SearchBox>
				<SearchGlass />
				Escribe aquí para buscar
			</SearchBox>
			<TaskApps>
				<TaskApp>
					<SnipApp />
				</TaskApp>
				<TaskApp>
					<FolderApp />
				</TaskApp>
				<TaskApp $open>
					<ChromeApp />
				</TaskApp>
				<TaskApp $open>
					<WordApp />
				</TaskApp>
			</TaskApps>
			<Tray>
				<TrayCell $w={24}>
					<HelpTray />
				</TrayCell>
				<TrayCell $w={27}>
					<Chevron />
				</TrayCell>
				<TrayCell $w={23}>
					<BatteryTray />
				</TrayCell>
				<TrayCell $w={24}>
					<WifiTray />
				</TrayCell>
				<TrayCell $w={33}>ESP</TrayCell>
				<TrayCell $w={72}>
					<div>
						6:10 p. m.
						<br />
						26/10/2019
					</div>
				</TrayCell>
				<TrayCell $w={42}>
					<NotifIcon />
					<NotifBadge>3</NotifBadge>
				</TrayCell>
				<ShowDesktop />
			</Tray>
		</Taskbar>
	</Screen>
)

export default App
